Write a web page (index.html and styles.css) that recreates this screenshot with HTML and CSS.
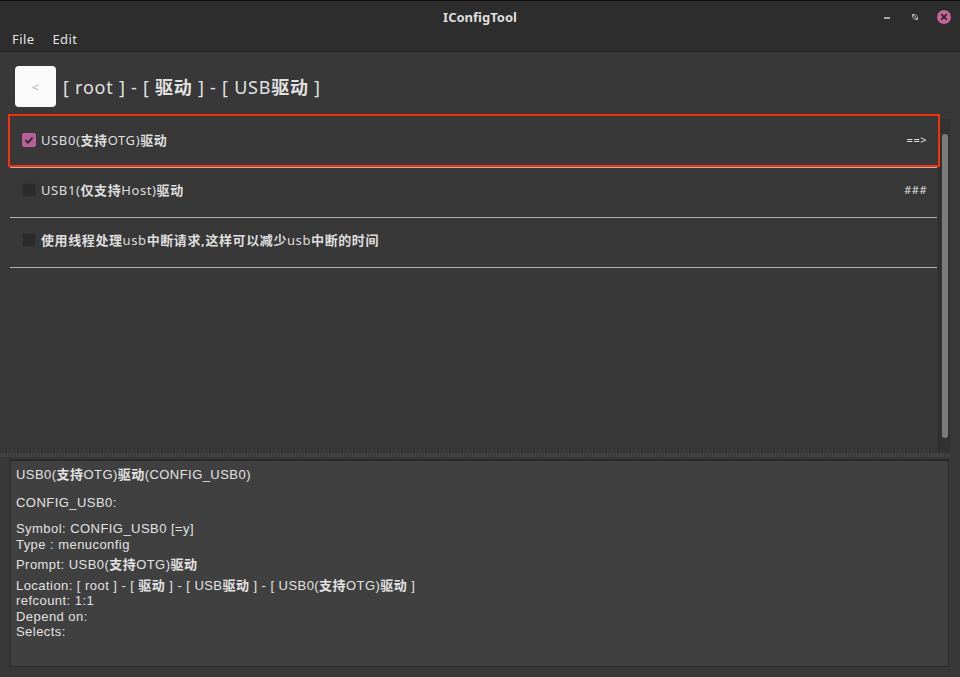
FILE: index.html
```html
<!DOCTYPE html>
<html>
<head>
<meta charset="utf-8">
<link rel="stylesheet" href="styles.css">
</head>
<body>
<div class="window">
  <div class="topstrip"></div>
  <div class="titlebar">
    <span class="title">IConfigTool</span>
    <div class="controls">
      <svg class="ctl" width="14" height="14" viewBox="0 0 14 14"><rect x="4" y="7" width="6" height="2" fill="#a8a8a8"/></svg>
      <svg class="ctl" width="14" height="14" viewBox="0 0 14 14"><path d="M4 4h4l-4 4z M10 10h-4l4-4z" fill="#a8a8a8"/><path d="M5 9L9 5" stroke="#a8a8a8" stroke-width="1"/></svg>
      <svg class="ctl" width="16" height="16" viewBox="0 0 16 16"><circle cx="8" cy="8" r="7" fill="#c7649e"/><path d="M5.2 5.2L10.8 10.8M10.8 5.2L5.2 10.8" stroke="#2b2b2b" stroke-width="1.8"/></svg>
    </div>
  </div>
  <div class="menubar">
    <span class="menu">File</span>
    <span class="menu">Edit</span>
  </div>
  <div class="content">
    <div class="crumbbar">
      <button class="back">&lt;</button>
      <span class="crumb">[ root ] - [ <b class="zh">驱动</b> ] - [ USB<b class="zh">驱动</b> ]</span>
    </div>
    <div class="listarea">
      <div class="list">
        <div class="row selected">
          <span class="check on"><svg width="14" height="14" viewBox="0 0 14 14"><path d="M3.5 7.2L6 9.6L10.6 4.6" fill="none" stroke="#2a2a2a" stroke-width="1.8"/></svg></span>
          <span class="label">USB0(<b class="zh">支持</b>OTG)<b class="zh">驱动</b></span>
          <span class="tag">==&gt;</span>
        </div>
        <div class="row">
          <span class="check"></span>
          <span class="label">USB1(<b class="zh">仅支持</b>Host)<b class="zh">驱动</b></span>
          <span class="tag">###</span>
        </div>
        <div class="row">
          <span class="check"></span>
          <span class="label"><b class="zh">使用线程处理</b>usb<b class="zh">中断请求,这样可以减少</b>usb<b class="zh">中断的时间</b></span>
        </div>
      </div>
      <div class="scrollbar"><div class="thumb"></div></div>
    </div>
    <div class="splitter"></div>
    <div class="info">
      <p class="g1">USB0(<b class="zh">支持</b>OTG)<b class="zh">驱动</b>(CONFIG_USB0)</p>
      <p class="g2">CONFIG_USB0:</p>
      <p>Symbol: CONFIG_USB0 [=y]</p>
      <p class="g3">Type : menuconfig</p>
      <p class="g3">Prompt: USB0(<b class="zh">支持</b>OTG)<b class="zh">驱动</b></p>
      <p>Location: [ root ] - [ <b class="zh">驱动</b> ] - [ USB<b class="zh">驱动</b> ] - [ USB0(<b class="zh">支持</b>OTG)<b class="zh">驱动</b> ]</p>
      <p>refcount: 1:1</p>
      <p>Depend on:</p>
      <p>Selects:</p>
    </div>
  </div>
</div>
</body>
</html>
```
FILE: styles.css
```css
* { box-sizing: border-box; }
html, body { margin: 0; padding: 0; }
body {
  background: #383838;
  font-family: "Noto Sans", "Noto Sans CJK SC", sans-serif;
  font-size: 13px;
  color: #dcdcdc;
  width: 960px;
  height: 677px;
  overflow: hidden;
}
.window { display: flex; flex-direction: column; height: 677px; }
.topstrip { height: 1px; background: #0c0c0c; }
.titlebar {
  height: 31px;
  background: #2d2d2d;
  display: flex;
  align-items: center;
  justify-content: center;
  position: relative;
}
.title { font-weight: bold; font-size: 13px; color: #dedede; }
.controls {
  position: absolute;
  right: 8px;
  top: 8px;
  display: flex;
  gap: 14px;
  align-items: center;
}
.ctl { display: block; }
.menubar {
  height: 20px;
  background: #2d2d2d;
  border-bottom: 1px solid #1f1f1f;
  display: flex;
  align-items: center;
  padding: 0 0 6px 12px;
  gap: 18px;
}
.menu { font-size: 13px; color: #e2e2e2; letter-spacing: 0.4px; }
.content { flex: 1; display: flex; flex-direction: column; }
.crumbbar {
  display: flex;
  align-items: center;
  padding: 14px 0 0 15px;
  gap: 7px;
  height: 55px;
}
.back {
  width: 41px;
  height: 41px;
  background: #fbfbfb;
  border: none;
  border-radius: 4px;
  color: #b4b4b4;
  font-family: "Noto Sans", sans-serif;
  font-size: 13px;
  padding: 0;
}
.crumb { font-size: 18px; color: #e0e0e0; letter-spacing: 0.75px; margin-top: -2px; }
.zh { font-weight: bold; }
.listarea {
  display: flex;
  margin: 7px 10px 0 8px;
  height: 339px;
}
.list { flex: 1; padding: 4px 1px 0 2px; }
.row {
  height: 50px;
  border-bottom: 1px solid #b4b4b4;
  display: flex;
  align-items: center;
  padding: 0 10px 6px 12px;
  gap: 5px;
  position: relative;
}
.row.selected::before {
  content: "";
  position: absolute;
  top: -4px;
  left: -2px;
  right: -3px;
  bottom: 0;
  border: 2px solid #f2320e;
}
.check {
  width: 14px;
  height: 14px;
  border-radius: 2px;
  background: #2b2b2b;
  border: 1px solid #333;
  flex: none;
  display: flex;
}
.check.on { background: #b85e98; border-color: #b85e98; }
.check svg { margin: -1px; }
.label { flex: 1; color: #dedede; letter-spacing: 0.6px; }
.tag { font-size: 11px; color: #e0e0e0; letter-spacing: 0.5px; }
.scrollbar {
  width: 12px;
  margin-top: 5px;
  background: #323232;
  border-left: 1px solid #2a2a2a;
  padding: 15px 0 0 3px;
}
.thumb {
  width: 6px;
  height: 304px;
  background: #7b7b7b;
  border-radius: 3px;
}
.splitter {
  height: 4px;
  margin: 0 10px 0 0;
  background-color: #3a3a3a;
  background-image: radial-gradient(circle, #4c4c4c 0.8px, transparent 1px);
  background-size: 3px 2px;
}
.info {
  margin: 2px 11px 10px 10px;
  flex: 1;
  background: #404040;
  border: 1px solid #2c2c2c;
  border-top: 2px solid #2a2a2a;
  padding: 6px 5px;
  font-family: "Liberation Sans", "Noto Sans CJK SC", sans-serif;
  font-size: 13px;
  line-height: 15.5px;
  color: #e2e2e2;
  letter-spacing: 0.45px;
}
.info p { margin: 0; }
.info .g1 { margin-bottom: 12px; }
.info .g2 { margin-bottom: 11px; }
.info .g3 { margin-bottom: 5px; }
```
